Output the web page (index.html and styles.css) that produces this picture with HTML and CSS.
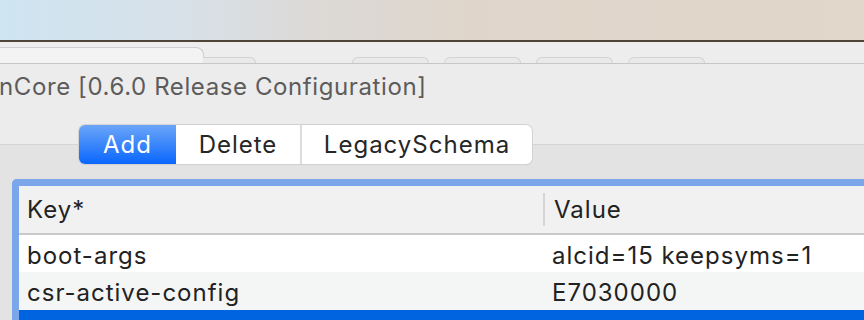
FILE: index.html
```html
<!DOCTYPE html>
<html lang="en">
<head>
    <meta charset="UTF-8">
    <meta name="viewport" content="width=device-width, initial-scale=1.0">
    <title>OpenCore Configurator</title>
    <link rel="stylesheet" href="styles.css">
</head>
<body>
    <div class="wallpaper"></div>

    <div class="window">
        <div class="tabbar">
            <div class="tab tab-active"></div>
            <div class="tab tab-small"></div>
            <div class="tab tab-far"></div>
            <div class="tab"></div>
            <div class="tab"></div>
            <div class="tab"></div>
        </div>

        <div class="title">nCore [0.6.0 Release Configuration]</div>

        <div class="segments">
            <div class="segment selected">Add</div>
            <div class="segment seg-delete">Delete</div>
            <div class="segment seg-legacy">LegacySchema</div>
        </div>

        <div class="tabview">
            <div class="table">
                <div class="table-head">
                    <div class="col-key">Key*</div>
                    <div class="col-sep"></div>
                    <div class="col-value">Value</div>
                </div>
                <div class="row">
                    <div class="col-key">boot-args</div>
                    <div class="col-value">alcid=15 keepsyms=1</div>
                </div>
                <div class="row row-alt">
                    <div class="col-key">csr-active-config</div>
                    <div class="col-value">E7030000</div>
                </div>
                <div class="row row-selected"></div>
            </div>
        </div>
    </div>
</body>
</html>
```

FILE: styles.css
```css
html, body {
    margin: 0;
    padding: 0;
}
body {
    width: 864px;
    height: 320px;
    overflow: hidden;
    font-family: Inter, "Liberation Sans", sans-serif;
    background: #ececec;
}
.wallpaper {
    height: 40px;
    background: linear-gradient(90deg, #cfe5f2 0%, #d7e1e9 20%, #dcdad8 35%, #dfd5ca 55%, #e2d7cb 100%);
    border-bottom: 2px solid #4f4438;
}
.window {
    background: #ececec;
}
.tabbar {
    height: 21px;
    display: flex;
    align-items: flex-end;
    background: #ededed;
    border-bottom: 1px solid #c7c7c7;
}
.tab {
    width: 75px;
    height: 5px;
    margin-left: 15px;
    border: 1px solid #d3d3d3;
    border-bottom: none;
    border-radius: 7px 7px 0 0;
    background: #e9e9e9;
}
.tab-active {
    width: 203px;
    height: 15px;
    margin-left: 0;
    border-left: none;
    border-radius: 0 8px 0 0;
    background: #f3f3f3;
    border-color: #cfcfcf;
}
.tab-small {
    width: 52px;
    margin-left: -1px;
    border-left: none;
    border-radius: 0 7px 0 0;
}
.tab-far {
    margin-left: 96px;
}
.title {
    height: 46px;
    padding-top: 8px;
    box-sizing: border-box;
    font-size: 24px;
    letter-spacing: 0.6px;
    line-height: 30px;
    color: #5c5c5c;
    white-space: nowrap;
    margin-left: -1px;
}
.segments {
    position: relative;
    z-index: 1;
    display: flex;
    margin: 15px 0 0 79px;
    width: 453px;
    height: 39px;
    border-radius: 6px;
    background: #fff;
    box-shadow: 0 0 0 1px #d2d2d2, 0 1px 1px rgba(0, 0, 0, 0.12);
}
.segment {
    display: flex;
    align-items: center;
    justify-content: center;
    font-size: 24px;
    letter-spacing: 1px;
    color: #262626;
}
.selected {
    width: 97px;
    color: #fff;
    border-radius: 6px 0 0 6px;
    background: linear-gradient(#6ba5f8, #0a67fe);
}
.seg-delete {
    width: 124px;
    border-right: 2px solid #dcdcdc;
}
.seg-legacy {
    width: 230px;
}
.tabview {
    margin-top: -20px;
    height: 176px;
    box-sizing: border-box;
    padding: 34px 0 0 12px;
    background: #e3e3e3;
    border-top: 1px solid #d4d4d4;
    overflow: hidden;
}
.table {
    border: 7px solid #7ba7ea;
    border-right: none;
    border-bottom: none;
    border-radius: 5px 0 0 0;
    background: #fff;
    font-size: 24px;
    letter-spacing: 1px;
    color: #222;
    white-space: nowrap;
}
.table-head {
    display: flex;
    align-items: center;
    height: 47px;
    background: #f1f1f1;
    border-bottom: 2px solid #c9c9c9;
}
.col-key {
    width: 516px;
    padding-left: 8px;
}
.col-sep {
    width: 2px;
    height: 33px;
    background: #d6d6d6;
}
.table-head .col-value {
    padding-left: 9px;
}
.row {
    display: flex;
    align-items: center;
    height: 37px;
    box-sizing: border-box;
    padding-top: 3px;
}
.row .col-key {
    width: 525px;
}
.row .col-value {
    padding-left: 0;
}
.row-alt {
    height: 38px;
    background: #f4f5f5;
}
.row-selected {
    height: 11px;
    padding-top: 0;
    background: #0064e1;
}
```
